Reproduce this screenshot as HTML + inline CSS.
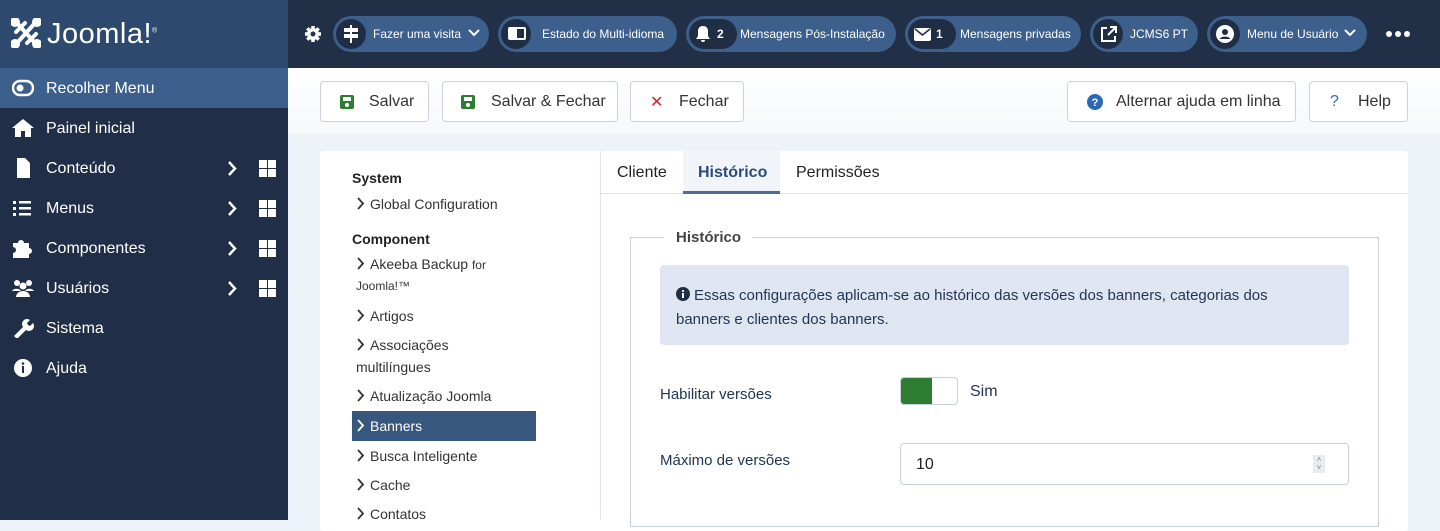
<!DOCTYPE html>
<html><head><meta charset="utf-8"><style>
*{box-sizing:border-box;margin:0;padding:0}
body{width:1440px;height:520px;overflow:hidden;font-family:"Liberation Sans",sans-serif;background:#eef3fa;position:relative}
.abs{position:absolute}
#logo{left:0;top:0;width:288px;height:68px;background:#2d4a6e}
#hdr{left:288px;top:0;width:1152px;height:68px;background:#212f47}
#side{left:0;top:68px;width:288px;height:452px;background:#202e47;color:#fff}
.si{position:absolute;left:0;width:288px;height:40px;font-size:16px}
.si .ic{position:absolute;left:12px;top:10px;width:22px;height:20px}
.si span{position:absolute;left:46px;top:12px}
.si .ch{position:absolute;left:227px;top:13px}
.si .gr{position:absolute;left:259px;top:12px;width:17px;height:17px;display:grid;grid-template-columns:8px 8px;gap:1px}
.si .gr i{background:#fff}
.pill{position:absolute;top:16px;height:36px;border-radius:18px;background:#3c5f8c;color:#fff;font-size:12px}
.pill .c{position:absolute;left:3px;top:3px;width:30px;height:30px;border-radius:15px;background:#1f2d45}
.pill .t{position:absolute;top:11px}
#tb{left:288px;top:68px;width:1152px;height:66px;background:linear-gradient(#fff,#f6f8fb)}
.btn{position:absolute;top:81px;height:41px;border:1px solid #c9d2dd;border-radius:4px;background:#fff;font-size:16px;color:#333}
.btn .t{position:absolute;top:11px}
#card{left:320px;top:151px;width:1088px;height:380px;background:#fff;border-radius:4px}
.tr{position:absolute;left:356px;font-size:14px;color:#333}
.tr svg{vertical-align:-1px;margin-right:5px}
</style></head><body>
<div id="logo" class="abs">
<svg class="abs" style="left:11px;top:18px" width="30" height="30" viewBox="0 0 30 30" fill="none" stroke="#fff" stroke-width="4" stroke-linecap="round"><path d="M6 5 L24 25 M24 5 L6 25 M5 14 L14 5 M16 25 L25 16"/><circle cx="4" cy="4" r="3" fill="#fff"/><circle cx="26" cy="4" r="3" fill="#fff"/><circle cx="4" cy="26" r="3" fill="#fff"/><circle cx="26" cy="26" r="3" fill="#fff"/></svg>
<div class="abs" style="left:47px;top:18px;color:#fff;font-size:29px;font-weight:300;letter-spacing:0.5px">Joomla!<sup style="font-size:7px">®</sup></div>
</div>
<div id="hdr" class="abs"></div>
<svg class="abs" style="left:304px;top:25px" width="18" height="18" viewBox="0 0 18 18"><circle cx="9" cy="9" r="6" fill="#fff"/><g stroke="#fff" stroke-width="3.5"><path d="M9 1v16M1 9h16M3.3 3.3l11.4 11.4M14.7 3.3L3.3 14.7"/></g><circle cx="9" cy="9" r="2.5" fill="#212f47"/></svg>
<div class="pill" style="left:333px;width:156px"><div class="c"></div><svg class="abs" style="left:10px;top:9px" width="16" height="18" viewBox="0 0 16 18" fill="#fff"><rect x="1" y="3" width="14" height="4"/><rect x="1" y="9" width="14" height="4"/><rect x="7" y="0" width="2" height="18"/></svg><span class="t" style="left:40px">Fazer uma visita</span><svg class="abs" style="left:135px;top:13px" width="12" height="9" viewBox="0 0 12 9"><path d="M1 1l5 5 5-5" stroke="#fff" stroke-width="2" fill="none"/></svg></div>
<div class="pill" style="left:498px;width:179px"><div class="c"></div><svg class="abs" style="left:10px;top:11px" width="18" height="13"><rect x="0" y="0" width="18" height="13" rx="2" fill="#fff"/><rect x="9" y="2" width="7" height="9" fill="#1f2d45"/></svg><span class="t" style="left:44px">Estado do Multi-idioma</span></div>
<div class="pill" style="left:686px;width:210px"><div class="c" style="width:48px"></div><svg class="abs" style="left:10px;top:10px" width="14" height="16" viewBox="0 0 14 16" fill="#fff"><path d="M7 0c-3 0-5 2-5 5v5L0 13h14l-2-3V5c0-3-2-5-5-5zM5 14h4a2 2 0 01-4 0z"/></svg><span class="t" style="left:31px;font-weight:bold">2</span><span class="t" style="left:54px">Mensagens Pós-Instalação</span></div>
<div class="pill" style="left:905px;width:176px"><div class="c" style="width:48px"></div><svg class="abs" style="left:9px;top:12px" width="17" height="13"><rect width="17" height="13" rx="2" fill="#fff"/><path d="M1 1l7.5 6L16 1" stroke="#1f2d45" stroke-width="1.5" fill="none"/></svg><span class="t" style="left:31px;font-weight:bold">1</span><span class="t" style="left:55px">Mensagens privadas</span></div>
<div class="pill" style="left:1090px;width:108px"><div class="c"></div><svg class="abs" style="left:10px;top:10px" width="17" height="17" viewBox="0 0 17 17" fill="none" stroke="#fff" stroke-width="2"><path d="M7 2H2v13h13v-5M10 1h6v6M16 1L8 9"/></svg><span class="t" style="left:40px">JCMS6 PT</span></div>
<div class="pill" style="left:1207px;width:160px"><div class="c"></div><svg class="abs" style="left:9px;top:9px" width="18" height="18" viewBox="0 0 18 18"><circle cx="9" cy="9" r="9" fill="#fff"/><circle cx="9" cy="7" r="3" fill="#1f2d45"/><path d="M3.5 14a6 4 0 0111 0" fill="#1f2d45"/></svg><span class="t" style="left:40px">Menu de Usuário</span><svg class="abs" style="left:137px;top:13px" width="12" height="9" viewBox="0 0 12 9"><path d="M1 1l5 5 5-5" stroke="#fff" stroke-width="2" fill="none"/></svg></div>
<div class="abs" style="left:1386px;top:31px;display:flex;gap:3px"><i style="width:6px;height:6px;border-radius:3px;background:#fff"></i><i style="width:6px;height:6px;border-radius:3px;background:#fff"></i><i style="width:6px;height:6px;border-radius:3px;background:#fff"></i></div>

<div id="side" class="abs">
<div class="si" style="top:0;background:#3c5f8c"><svg class="ic" viewBox="0 0 22 20"><rect x="1" y="3" width="20" height="14" rx="7" fill="none" stroke="#fff" stroke-width="2.5"/><circle cx="8" cy="10" r="3.5" fill="#fff"/></svg><span>Recolher Menu</span></div>
<div class="si" style="top:40px"><svg class="ic" viewBox="0 0 22 20" fill="#fff"><path d="M11 1L0 10h3v9h6v-6h4v6h6v-9h3z"/></svg><span>Painel inicial</span></div>
<div class="si" style="top:80px"><svg class="ic" viewBox="0 0 22 20" fill="#fff"><path d="M5 0h8l5 5v15H5z"/></svg><span>Conteúdo</span><svg class="ch" width="10" height="15" viewBox="0 0 10 15"><path d="M2 1l6 6.5L2 14" stroke="#fff" stroke-width="2.5" fill="none"/></svg><div class="gr"><i></i><i></i><i></i><i></i></div></div>
<div class="si" style="top:120px"><svg class="ic" viewBox="0 0 22 20" fill="#fff"><rect x="1" y="3" width="3" height="3"/><rect x="1" y="9" width="3" height="3"/><rect x="1" y="15" width="3" height="3"/><rect x="7" y="3" width="12" height="2.5"/><rect x="7" y="9" width="12" height="2.5"/><rect x="7" y="15" width="12" height="2.5"/></svg><span>Menus</span><svg class="ch" width="10" height="15" viewBox="0 0 10 15"><path d="M2 1l6 6.5L2 14" stroke="#fff" stroke-width="2.5" fill="none"/></svg><div class="gr"><i></i><i></i><i></i><i></i></div></div>
<div class="si" style="top:160px"><svg class="ic" viewBox="0 0 22 20" fill="#fff"><path d="M1 5h5a3 3 0 016 0h5v5a3 3 0 010 6v4H1v-5a3 3 0 000-6z"/></svg><span>Componentes</span><svg class="ch" width="10" height="15" viewBox="0 0 10 15"><path d="M2 1l6 6.5L2 14" stroke="#fff" stroke-width="2.5" fill="none"/></svg><div class="gr"><i></i><i></i><i></i><i></i></div></div>
<div class="si" style="top:200px"><svg class="ic" viewBox="0 0 22 20" fill="#fff"><circle cx="5" cy="5" r="3"/><circle cx="17" cy="5" r="3"/><circle cx="11" cy="8" r="3.5"/><path d="M4 19a7 6 0 0114 0z"/><path d="M0 13a5 4 0 019 0zM13 13a5 4 0 019 0z"/></svg><span>Usuários</span><svg class="ch" width="10" height="15" viewBox="0 0 10 15"><path d="M2 1l6 6.5L2 14" stroke="#fff" stroke-width="2.5" fill="none"/></svg><div class="gr"><i></i><i></i><i></i><i></i></div></div>
<div class="si" style="top:240px"><svg class="ic" viewBox="0 0 22 20" fill="#fff"><path d="M2 18l9-9a5 5 0 017-7l-3 3 1 2 2 1 3-3a5 5 0 01-7 7l-9 9z"/></svg><span>Sistema</span></div>
<div class="si" style="top:280px"><svg class="ic" viewBox="0 0 22 20"><circle cx="11" cy="10" r="9" fill="#fff"/><rect x="10" y="8" width="2" height="7" fill="#202e47"/><circle cx="11" cy="5.5" r="1.3" fill="#202e47"/></svg><span>Ajuda</span></div>
</div>

<div id="tb" class="abs"></div>
<div class="btn" style="left:320px;width:109px"><svg class="abs" style="left:19px;top:13px" width="14" height="14"><rect width="14" height="14" rx="2" fill="#2f7d32"/><rect x="3" y="2" width="8" height="4" fill="#fff"/><circle cx="7" cy="10" r="2" fill="#fff"/></svg><span class="t" style="left:48px">Salvar</span></div>
<div class="btn" style="left:442px;width:176px"><svg class="abs" style="left:18px;top:13px" width="14" height="14"><rect width="14" height="14" rx="2" fill="#2f7d32"/><rect x="3" y="2" width="8" height="4" fill="#fff"/><circle cx="7" cy="10" r="2" fill="#fff"/></svg><span class="t" style="left:48px">Salvar &amp; Fechar</span></div>
<div class="btn" style="left:630px;width:114px"><span class="t" style="left:19px;color:#c52827;top:10px">✕</span><span class="t" style="left:48px">Fechar</span></div>
<div class="btn" style="left:1067px;width:229px"><svg class="abs" style="left:19px;top:12px" width="16" height="16"><circle cx="8" cy="8" r="8" fill="#2a69b8"/><text x="8" y="12" font-size="11" font-weight="bold" text-anchor="middle" fill="#fff" font-family="Liberation Sans">?</text></svg><span class="t" style="left:48px">Alternar ajuda em linha</span></div>
<div class="btn" style="left:1309px;width:99px"><span class="t" style="left:20px;color:#2a69b8">?</span><span class="t" style="left:48px">Help</span></div>

<div id="card" class="abs"></div>
<div class="abs" style="left:352px;top:170px;font-size:14px;font-weight:bold;color:#222">System</div>
<div class="abs tr" style="top:196px"><svg width="9" height="13" viewBox="0 0 9 13"><path d="M2 1l5 5.5L2 12" stroke="#333" stroke-width="1.8" fill="none"/></svg>Global Configuration</div>
<div class="abs" style="left:352px;top:231px;font-size:14px;font-weight:bold;color:#222">Component</div>
<div class="abs tr" style="top:256px"><svg width="9" height="13" viewBox="0 0 9 13"><path d="M2 1l5 5.5L2 12" stroke="#333" stroke-width="1.8" fill="none"/></svg>Akeeba Backup <span style="font-size:12px">for</span></div>
<div class="abs tr" style="top:279px;font-size:12px">Joomla!™</div>
<div class="abs tr" style="top:308px"><svg width="9" height="13" viewBox="0 0 9 13"><path d="M2 1l5 5.5L2 12" stroke="#333" stroke-width="1.8" fill="none"/></svg>Artigos</div>
<div class="abs tr" style="top:337px"><svg width="9" height="13" viewBox="0 0 9 13"><path d="M2 1l5 5.5L2 12" stroke="#333" stroke-width="1.8" fill="none"/></svg>Associações</div>
<div class="abs tr" style="top:359px">multilíngues</div>
<div class="abs" style="left:352px;top:411px;width:184px;height:30px;background:#37577f"></div>
<div class="abs tr" style="top:388px"><svg width="9" height="13" viewBox="0 0 9 13"><path d="M2 1l5 5.5L2 12" stroke="#333" stroke-width="1.8" fill="none"/></svg>Atualização Joomla</div>
<div class="abs tr" style="top:418px;color:#fff"><svg width="9" height="13" viewBox="0 0 9 13"><path d="M2 1l5 5.5L2 12" stroke="#fff" stroke-width="1.8" fill="none"/></svg>Banners</div>
<div class="abs tr" style="top:448px"><svg width="9" height="13" viewBox="0 0 9 13"><path d="M2 1l5 5.5L2 12" stroke="#333" stroke-width="1.8" fill="none"/></svg>Busca Inteligente</div>
<div class="abs tr" style="top:477px"><svg width="9" height="13" viewBox="0 0 9 13"><path d="M2 1l5 5.5L2 12" stroke="#333" stroke-width="1.8" fill="none"/></svg>Cache</div>
<div class="abs tr" style="top:506px"><svg width="9" height="13" viewBox="0 0 9 13"><path d="M2 1l5 5.5L2 12" stroke="#333" stroke-width="1.8" fill="none"/></svg>Contatos</div>

<div class="abs" style="left:600px;top:151px;width:1px;height:369px;background:#dfe5ec"></div>
<div class="abs" style="left:601px;top:193px;width:807px;height:1px;background:#dfe5ec"></div>
<div class="abs" style="left:683px;top:151px;width:97px;height:43px;background:#f1f5fa;border-bottom:3px solid #4d6d96"></div>
<div class="abs" style="left:617px;top:164px;font-size:16px;color:#222">Cliente</div>
<div class="abs" style="left:698px;top:164px;font-size:16px;color:#2c4c77;font-weight:bold">Histórico</div>
<div class="abs" style="left:796px;top:164px;font-size:16px;color:#222">Permissões</div>

<div class="abs" style="left:630px;top:237px;width:749px;height:290px;border:1px solid #c7d1dc"></div>
<div class="abs" style="left:664px;top:229px;padding:0 12px;background:#fff;font-size:15px;font-weight:bold;color:#444">Histórico</div>
<div class="abs" style="left:660px;top:265px;width:689px;height:80px;background:#dfe6f1;border-radius:4px"></div>
<svg class="abs" style="left:676px;top:287px" width="14" height="14"><circle cx="7" cy="7" r="7" fill="#1f2d45"/><rect x="6" y="6" width="2" height="5" fill="#fff"/><circle cx="7" cy="4" r="1.1" fill="#fff"/></svg>
<div class="abs" style="left:676px;top:284px;width:625px;font-size:15px;line-height:24px;color:#1f3452;text-indent:18px">Essas configurações aplicam-se ao histórico das versões dos banners, categorias dos banners e clientes dos banners.</div>

<div class="abs" style="left:660px;top:386px;font-size:15px;color:#1f3452">Habilitar versões</div>
<div class="abs" style="left:900px;top:377px;width:58px;height:28px;border:1px solid #c7d1dc;border-radius:4px;background:#fff;overflow:hidden"><div style="width:31px;height:26px;background:#2f7d32"></div></div>
<div class="abs" style="left:970px;top:383px;font-size:16px;color:#1f3452">Sim</div>
<div class="abs" style="left:660px;top:452px;font-size:15px;color:#1f3452">Máximo de versões</div>
<div class="abs" style="left:900px;top:443px;width:449px;height:42px;border:1px solid #c7d1dc;border-radius:4px;background:#fff"></div>
<div class="abs" style="left:916px;top:456px;font-size:16px;color:#222">10</div>
<div class="abs" style="left:1313px;top:455px;width:12px;height:18px;background:#e8ebef;color:#888;font-size:8px;line-height:8px;text-align:center;padding-top:1px">˄<br>˅</div>
</body></html>
